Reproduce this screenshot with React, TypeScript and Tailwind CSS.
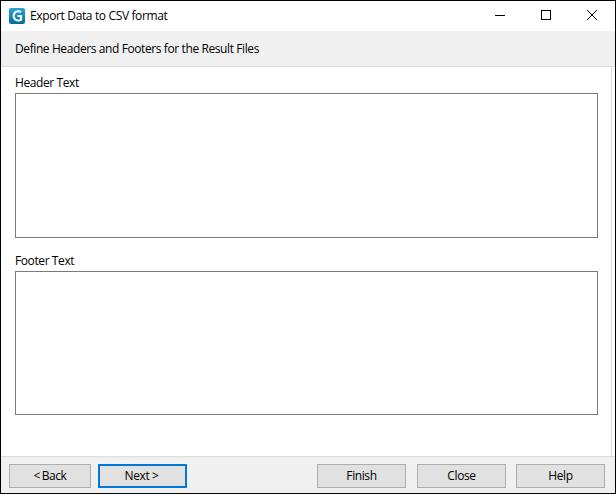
const font = "font-['Open_Sans',sans-serif]"

function WizardButton({ label, width, focused, tight }: { label: string; width: string; focused?: boolean; tight?: boolean }) {
  return (
    <button
      className={`${width} h-6 bg-[#e1e1e1] text-xs tracking-[-0.4px] text-black flex items-center justify-center ${
        tight ? '[word-spacing:-1px]' : ''
      } ${focused ? 'border-2 border-[#0078d7] pr-[2px]' : 'border border-[#adadad]'}`}
    >
      {label}
    </button>
  )
}

export default function App() {
  return (
    <div className={`w-[616px] h-[494px] bg-white border border-black flex flex-col text-black ${font}`}>
      {/* title bar */}
      <div className="h-[30px] flex items-center shrink-0">
        <svg className="ml-2 w-4 h-4" viewBox="0 0 16 16">
          <defs>
            <linearGradient id="g" x1="0" y1="0" x2="0" y2="1">
              <stop offset="0" stopColor="#2aa3d8" />
              <stop offset="1" stopColor="#04699f" />
            </linearGradient>
          </defs>
          <rect width="16" height="16" rx="2" fill="url(#g)" />
          <path d="M12 4.2A4.6 4.6 0 1 0 12 11.6V8H8.4" fill="none" stroke="#fff" strokeWidth="2.2" />
        </svg>
        <span className="ml-[5px] text-xs tracking-[-0.36px]">Export Data to CSV format</span>
        <div className="ml-auto flex items-center">
          <svg className="w-[46px] h-[30px]" viewBox="0 0 46 30">
            <path d="M18 14.5h10" stroke="#000" fill="none" />
          </svg>
          <svg className="w-[46px] h-[30px]" viewBox="0 0 46 30">
            <rect x="18.5" y="9.5" width="9" height="9" stroke="#000" fill="none" />
          </svg>
          <svg className="w-[46px] h-[30px]" viewBox="0 0 46 30">
            <path d="M18 9l10 10M28 9L18 19" stroke="#000" fill="none" />
          </svg>
        </div>
      </div>

      {/* step heading */}
      <div className="h-9 shrink-0 bg-[#f0f0f0] border-b border-[#dcdcdc] flex items-center pl-[14px] text-xs tracking-[-0.4px]">
        Define Headers and Footers for the Result Files
      </div>

      {/* fields */}
      <div className="flex-1 flex flex-col px-[14px] mr-[3px] border-r border-[#dcdcdc]">
        <label className="mt-[6px] h-5 text-xs tracking-[-0.4px] leading-[19px]">Header Text</label>
        <div className="h-[145px] w-[583px] border border-[#7a7a7a]" />
        <label className="mt-[13px] h-5 text-xs tracking-[-0.4px] leading-[19px]">Footer Text</label>
        <div className="h-[144px] w-[583px] border border-[#7a7a7a]" />
      </div>

      {/* footer */}
      <div className="h-[37px] shrink-0 bg-[#f0f0f0] border-t border-[#dcdcdc] flex items-start pt-[7px] pl-2">
        <WizardButton label="< Back" width="w-[82px]" tight />
        <div className="ml-[7px]">
          <WizardButton label="Next >" width="w-[89px]" focused />
        </div>
        <div className="ml-[130px]">
          <WizardButton label="Finish" width="w-[89px]" />
        </div>
        <div className="ml-[11px]">
          <WizardButton label="Close" width="w-[89px]" />
        </div>
        <div className="ml-[10px]">
          <WizardButton label="Help" width="w-[89px]" />
        </div>
      </div>
    </div>
  )
}
